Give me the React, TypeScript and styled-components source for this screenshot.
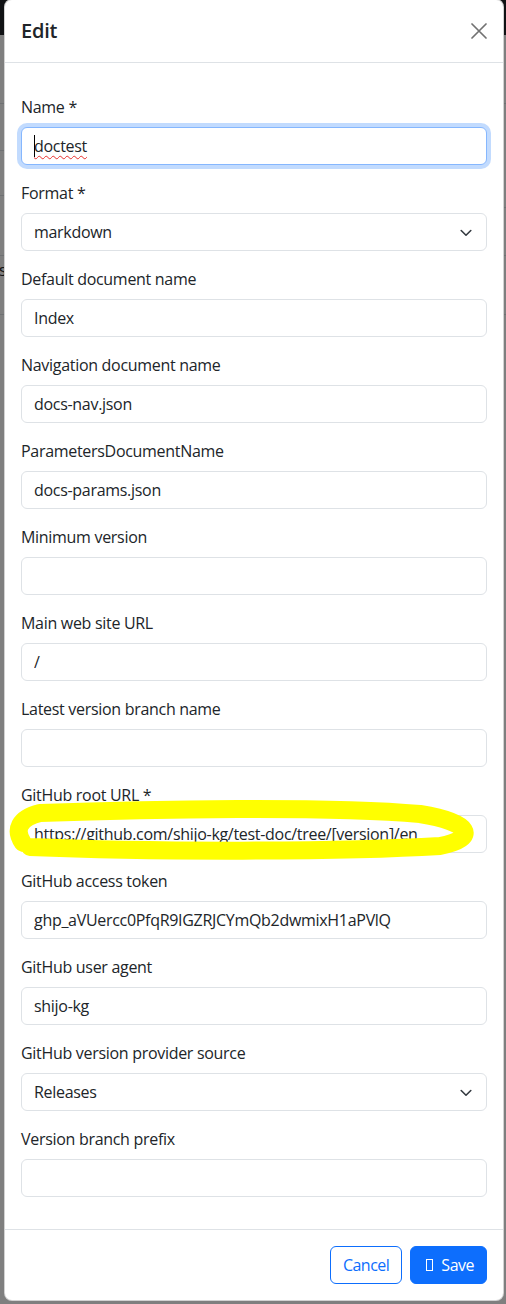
import React from 'react';
import styled, { createGlobalStyle } from 'styled-components';

const GlobalStyle = createGlobalStyle`
  html, body {
    margin: 0;
    padding: 0;
  }
  body {
    background: #ffffff;
    font-family: "Open Sans", "Noto Sans", Arial, sans-serif;
    color: #212529;
  }
  * {
    box-sizing: border-box;
  }
`;

const Page = styled.div`
  position: relative;
  width: 506px;
  height: 1304px;
  overflow: hidden;
`;

/* the app page behind the modal */
const NavBar = styled.div`
  height: 35px;
  background: #212529;
`;

const UnderContent = styled.div`
  display: flex;
  justify-content: space-between;
`;

const UnderColumn = styled.div`
  width: 40px;
  display: flex;
  flex-direction: column;
`;

const UnderRow = styled.div<{ $h: number }>`
  height: ${(p) => p.$h}px;
  border-bottom: 1px solid #dee2e6;
  font-size: 16px;
  line-height: 24px;
  padding-top: 2px;
  color: #212529;
`;

const UnderText = styled.span`
  margin-left: -5px;
`;

const Backdrop = styled.div`
  position: absolute;
  inset: 0;
  background: rgba(0, 0, 0, 0.5);
`;

const ModalLayer = styled.div`
  position: absolute;
  inset: 0;
  padding: 0 2px 0 4px;
`;

const Dialog = styled.div`
  margin-top: -1px;
  background: #ffffff;
  border: 1px solid rgba(0, 0, 0, 0.175);
  border-radius: 8px;
  display: flex;
  flex-direction: column;
`;

const Header = styled.div`
  display: flex;
  align-items: center;
  justify-content: space-between;
  padding: 16px;
  border-bottom: 1px solid #dee2e6;
`;

const Title = styled.h5`
  margin: 0;
  font-size: 20px;
  font-weight: 600;
  line-height: 30px;
  letter-spacing: -0.2px;
`;

const CloseButton = styled.button`
  width: 16px;
  height: 16px;
  padding: 0;
  border: none;
  background: transparent;
  display: flex;
  align-items: center;
  justify-content: center;
  color: #000;
  opacity: 0.55;
  cursor: pointer;
`;

const Body = styled.div`
  padding: 32px 16px 16px;
`;

const Field = styled.div`
  position: relative;
  margin-bottom: 16px;
`;

const Label = styled.label`
  display: block;
  margin-bottom: 8px;
  font-size: 16px;
  line-height: 24px;
  letter-spacing: -0.3px;
`;

const InputWrap = styled.div`
  position: relative;
`;

const Input = styled.input<{ $focused?: boolean }>`
  display: block;
  width: 100%;
  height: 38px;
  padding: 6px 12px;
  font-family: inherit;
  font-size: 16px;
  line-height: 24px;
  letter-spacing: -0.3px;
  color: #212529;
  background: #ffffff;
  border: 1px solid ${(p) => (p.$focused ? '#86b7fe' : '#dee2e6')};
  border-radius: 6px;
  outline: none;
  box-shadow: ${(p) => (p.$focused ? '0 0 0 4px rgba(13, 110, 253, 0.25)' : 'none')};
`;

/* spell-check squiggle drawn over the focused input's text */
const SpellMark = styled.span`
  position: absolute;
  left: 13px;
  top: 7px;
  font-size: 16px;
  line-height: 24px;
  letter-spacing: -0.3px;
  color: transparent;
  text-decoration: underline wavy #e8302d;
  text-decoration-thickness: 1px;
  text-underline-offset: 3px;
  pointer-events: none;
`;

const Caret = styled.span`
  position: absolute;
  left: 13px;
  top: 8px;
  width: 1px;
  height: 22px;
  background: #000;
`;

const Select = styled.select`
  display: block;
  width: 100%;
  height: 38px;
  padding: 6px 36px 6px 12px;
  font-family: inherit;
  font-size: 16px;
  line-height: 24px;
  letter-spacing: -0.3px;
  color: #212529;
  background: #ffffff;
  border: 1px solid #dee2e6;
  border-radius: 6px;
  appearance: none;
  outline: none;
`;

const Chevron = styled.svg`
  position: absolute;
  right: 15px;
  top: 16px;
  pointer-events: none;
`;

const HighlightMark = styled.svg`
  position: absolute;
  left: -21px;
  top: 0;
  overflow: visible;
  pointer-events: none;
`;

const Footer = styled.div`
  display: flex;
  justify-content: flex-end;
  gap: 8px;
  padding: 16px;
  border-top: 1px solid #dee2e6;
`;

const Button = styled.button<{ $variant: 'primary' | 'outline' }>`
  display: inline-flex;
  align-items: center;
  height: 38px;
  padding: 6px 12px;
  font-family: inherit;
  font-size: 16px;
  line-height: 24px;
  letter-spacing: -0.5px;
  border-radius: 6px;
  border: 1px solid #0d6efd;
  background: ${(p) => (p.$variant === 'primary' ? '#0d6efd' : '#ffffff')};
  color: ${(p) => (p.$variant === 'primary' ? '#ffffff' : '#0d6efd')};
  cursor: pointer;
`;

const MissingGlyph = styled.span`
  display: inline-block;
  width: 7px;
  height: 12px;
  margin: 0 8px 0 3px;
  border: 1.3px solid #ffffff;
`;

type FieldDef = {
  label: string;
  value: string;
  kind?: 'input' | 'select';
  focused?: boolean;
  highlight?: boolean;
};

const fields: FieldDef[] = [
  { label: 'Name *', value: 'doctest', focused: true },
  { label: 'Format *', value: 'markdown', kind: 'select' },
  { label: 'Default document name', value: 'Index' },
  { label: 'Navigation document name', value: 'docs-nav.json' },
  { label: 'ParametersDocumentName', value: 'docs-params.json' },
  { label: 'Minimum version', value: '' },
  { label: 'Main web site URL', value: '/' },
  { label: 'Latest version branch name', value: '' },
  { label: 'GitHub root URL *', value: 'https://github.com/shijo-kg/test-doc/tree/[version]/en', highlight: true },
  { label: 'GitHub access token', value: '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' },
  { label: 'GitHub user agent', value: 'shijo-kg' },
  { label: 'GitHub version provider source', value: 'Releases', kind: 'select' },
  { label: 'Version branch prefix', value: '' },
];

const leftRows = [69, 47, 45, 60, 59];
const rightRows = [69, 104, 48, 59];

const FormField: React.FC<{ field: FieldDef; index: number }> = ({ field, index }) => {
  const id = `field-${index}`;
  return (
    <Field>
      <Label htmlFor={id}>{field.label}</Label>
      <InputWrap>
        {field.kind === 'select' ? (
          <>
            <Select id={id} defaultValue={field.value}>
              <option value={field.value}>{field.value}</option>
            </Select>
            <Chevron width="12" height="8" viewBox="0 0 12 8">
              <path d="M1.2 1.5 L6 6.2 L10.8 1.5" fill="none" stroke="#343a40" strokeWidth="1.6" strokeLinecap="round" strokeLinejoin="round" />
            </Chevron>
          </>
        ) : (
          <>
            <Input
              id={id}
              type="text"
              defaultValue={field.value}
              spellCheck={false}
              $focused={field.focused}
            />
            {field.focused && (
              <>
                <SpellMark aria-hidden="true">{field.value}</SpellMark>
                <Caret />
              </>
            )}
          </>
        )}
      </InputWrap>
      {field.highlight && (
        <HighlightMark width="506" height="90" viewBox="0 783 506 90">
          <path
            d="M23 843 C14 830, 19 818, 40 813 C150 809, 330 806, 420 814 C470 822, 480 838, 440 846 C340 852, 150 852, 30 847"
            fill="none"
            stroke="#ffff00"
            strokeWidth="18"
            strokeLinecap="round"
            strokeLinejoin="round"
          />
        </HighlightMark>
      )}
    </Field>
  );
};

export default function App() {
  return (
    <Page>
      <GlobalStyle />
      <NavBar />
      <UnderContent>
        <UnderColumn>
          {leftRows.map((h, i) => (
            <UnderRow key={i} $h={h}>
              {i === 4 && <UnderText>ls</UnderText>}
            </UnderRow>
          ))}
        </UnderColumn>
        <UnderColumn>
          {rightRows.map((h, i) => (
            <UnderRow key={i} $h={h} />
          ))}
        </UnderColumn>
      </UnderContent>
      <Backdrop />
      <ModalLayer>
        <Dialog>
          <Header>
            <Title>Edit</Title>
            <CloseButton aria-label="Close">
              <svg width="16" height="16" viewBox="0 0 16 16">
                <path d="M1 1 L15 15 M15 1 L1 15" stroke="currentColor" strokeWidth="1.7" strokeLinecap="round" />
              </svg>
            </CloseButton>
          </Header>
          <Body>
            {fields.map((f, i) => (
              <FormField key={f.label} field={f} index={i} />
            ))}
          </Body>
          <Footer>
            <Button $variant="outline">Cancel</Button>
            <Button $variant="primary">
              <MissingGlyph />
              Save
            </Button>
          </Footer>
        </Dialog>
      </ModalLayer>
    </Page>
  );
}
